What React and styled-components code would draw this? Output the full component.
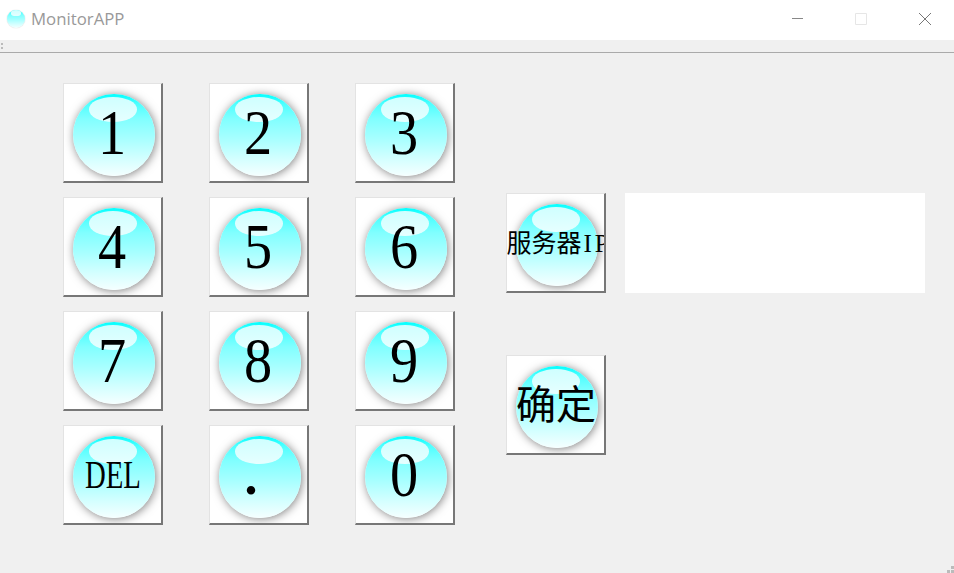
import React from "react";
import styled, { createGlobalStyle } from "styled-components";

const GlobalStyle = createGlobalStyle`
  html, body {
    margin: 0;
    height: 100%;
    background: #f0f0f0;
    font-family: "Liberation Serif", "Noto Sans CJK SC", serif;
  }
`;

const Window = styled.div`
  position: relative;
  width: 954px;
  height: 573px;
  overflow: hidden;
  background: #f0f0f0;
`;

const TitleBar = styled.header`
  display: flex;
  align-items: center;
  height: 40px;
  padding: 0 23px 3px 7px;
  box-sizing: border-box;
  background: #fff;
`;

const AppName = styled.span`
  margin-left: 6px;
  font: 16.8px "Open Sans", sans-serif;
  color: #999;
`;

const Controls = styled.div`
  display: flex;
  align-items: center;
  gap: 52px;
  margin-left: auto;
`;

const ToolBar = styled.div`
  position: relative;
  height: 12px;
  border-bottom: 1px solid #aaa;
`;

const Dots = styled.svg`
  position: absolute;
  display: block;
`;

const ToolGrip = styled(Dots)`
  left: 0;
  top: 3px;
`;

const SizeGrip = styled(Dots)`
  right: 0;
  bottom: 0;
`;

const Main = styled.main`
  display: flex;
  padding: 30px 0 0 63px;
`;

const Keypad = styled.div`
  display: grid;
  grid-template-columns: repeat(3, 100px);
  grid-auto-rows: 100px;
  column-gap: 46px;
  row-gap: 14px;
`;

const Side = styled.div`
  display: flex;
  flex-direction: column;
  gap: 62px;
  margin: 110px 0 0 51px;
`;

const IpRow = styled.div`
  display: flex;
  gap: 19px;
`;

const IpField = styled.input`
  width: 300px;
  height: 100px;
  padding: 0;
  border: 0;
  outline: 0;
  background: #fff;
`;

const Key = styled.button`
  display: flex;
  align-items: center;
  justify-content: center;
  box-sizing: border-box;
  width: 100px;
  height: 100px;
  padding: 5px 0 0 3px;
  overflow: hidden;
  background: #fff;
  border-style: solid;
  border-width: 1px 2px 2px 1px;
  border-color: #e3e3e3 #777 #777 #e3e3e3;
  border-radius: 0;
  font-family: inherit;
  color: #000;
`;

const Ball = styled.span`
  position: relative;
  flex: none;
  display: flex;
  align-items: center;
  justify-content: center;
  width: ${(p) => p.$size}px;
  height: ${(p) => p.$size}px;
  border-radius: 50%;
  background: linear-gradient(
    180deg,
    #00ffff 0%,
    #4dffff 12%,
    #80ffff 30%,
    #a8ffff 55%,
    #d5ffff 80%,
    #f5ffff 100%
  );
  box-shadow: ${(p) => (p.$small ? "0 0 1px rgba(0, 0, 0, 0.3)" : "1px 1px 10px rgba(0, 0, 0, 0.5)")};

  &::before {
    content: "";
    position: absolute;
    left: 20%;
    top: 4%;
    width: 58%;
    height: 30%;
    border-radius: 50%;
    background: linear-gradient(180deg, #cfffff, #e6ffff);
  }
`;

const Label = styled.span`
  position: relative;
  display: block;
  font-size: ${(p) => p.$font}px;
  line-height: 1;
  white-space: nowrap;
  transform: scaleX(${(p) => p.$stretch || 1});
  top: ${(p) => p.$drop || 0}px;
  left: ${(p) => p.$shift || 0}px;
`;

const Latin = styled.span`
  margin-left: 2px;
  letter-spacing: 3px;
`;

const digit = (text) => ({ text, font: 64, stretch: 0.88, drop: -2, shift: -2 });

const keys = [
  digit("1"),
  digit("2"),
  digit("3"),
  digit("4"),
  digit("5"),
  digit("6"),
  digit("7"),
  digit("8"),
  digit("9"),
  { text: "DEL", font: 40, stretch: 0.72, drop: -2, shift: -1 },
  { text: ".", font: 72, drop: -7, shift: -9 },
  digit("0"),
];

const RoundKey = ({ text, font, stretch, drop, shift, children }) => (
  <Key>
    <Ball $size={82}>
      <Label $font={font} $stretch={stretch} $drop={drop} $shift={shift}>
        {text}
        {children}
      </Label>
    </Ball>
  </Key>
);

const App = () => (
  <Window>
    <GlobalStyle />
    <TitleBar>
      <Ball $size={18} $small />
      <AppName>MonitorAPP</AppName>
      <Controls>
        <svg width="12" height="12" viewBox="0 0 12 12">
          <path d="M1 5.5H13" stroke="#888" fill="none" />
        </svg>
        <svg width="12" height="12" viewBox="0 0 12 12">
          <path d="M.5 .5H11.5V11.5H.5Z" stroke="#e6e6e6" fill="none" />
        </svg>
        <svg width="12" height="12" viewBox="0 0 12 12">
          <path d="M0 0L12 12M12 0L0 12" stroke="#777" fill="none" />
        </svg>
      </Controls>
    </TitleBar>
    <ToolBar>
      <ToolGrip width="3" height="6" viewBox="0 0 3 6">
        <path d="M1 0h2v2H1zM1 4h2v2H1z" fill="#bbb" />
      </ToolGrip>
    </ToolBar>
    <Main>
      <Keypad>
        {keys.map((k) => (
          <RoundKey key={k.text} {...k} />
        ))}
      </Keypad>
      <Side>
        <IpRow>
          <RoundKey text="服务器" font={25} drop={-2} shift={2}>
            <Latin>IP</Latin>
          </RoundKey>
          <IpField />
        </IpRow>
        <RoundKey text="确定" font={40} drop={-1} shift={-1} />
      </Side>
    </Main>
    <SizeGrip width="7" height="7" viewBox="0 0 7 7">
      <path d="M4 0h3v3H4zM0 4h3v3H0zM4 4h3v3H4z" fill="#bbb" />
    </SizeGrip>
  </Window>
);

export default App;
